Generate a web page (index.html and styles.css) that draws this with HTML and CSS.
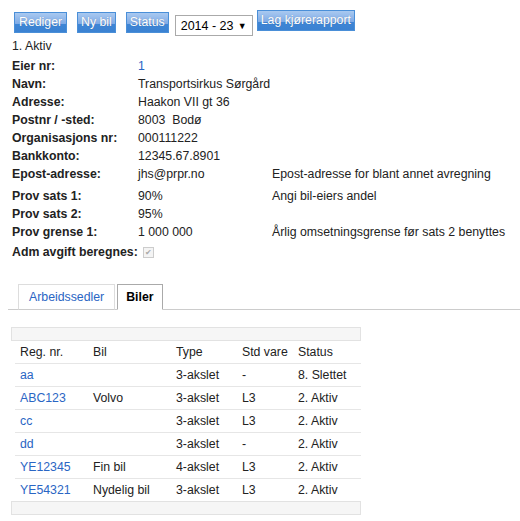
FILE: index.html
```html
<!DOCTYPE html>
<html lang="no">
<head>
  <meta charset="UTF-8" />
  <title>Eier</title>
  <link rel="stylesheet" href="styles.css">
</head>
<body>
  <div class="toolbar">
    <button class="btn">Rediger</button>
    <button class="btn">Ny bil</button>
    <button class="btn">Status</button>
    <div class="select">2014 - 23 <span class="arrow">&#9660;</span></div>
    <button class="btn btn-report">Lag kjørerapport</button>
  </div>

  <div class="status">1. Aktiv</div>

  <div class="details">
    <div class="row"><span class="label">Eier nr:</span><a class="value" href="#">1</a></div>
    <div class="row"><span class="label">Navn:</span><span class="value">Transportsirkus Sørgård</span></div>
    <div class="row"><span class="label">Adresse:</span><span class="value">Haakon VII gt 36</span></div>
    <div class="row"><span class="label">Postnr / -sted:</span><span class="value">8003&nbsp; Bodø</span></div>
    <div class="row"><span class="label">Organisasjons nr:</span><span class="value">000111222</span></div>
    <div class="row"><span class="label">Bankkonto:</span><span class="value">12345.67.8901</span></div>
    <div class="row row-gap"><span class="label">Epost-adresse:</span><span class="value">jhs@prpr.no</span><span class="note">Epost-adresse for blant annet avregning</span></div>
    <div class="row"><span class="label">Prov sats 1:</span><span class="value">90%</span><span class="note">Angi bil-eiers andel</span></div>
    <div class="row"><span class="label">Prov sats 2:</span><span class="value">95%</span></div>
    <div class="row"><span class="label">Prov grense 1:</span><span class="value">1 000 000</span><span class="note">Årlig omsetningsgrense før sats 2 benyttes</span></div>
    <div class="row row-check"><span class="label label-wide">Adm avgift beregnes:</span><span class="check">&#10004;</span></div>
  </div>

  <div class="tabs">
    <a class="tab" href="#">Arbeidssedler</a>
    <span class="tab tab-active">Biler</span>
  </div>

  <div class="panel">
    <div class="bar"></div>
    <table class="cars">
      <thead>
        <tr><th class="c-reg">Reg. nr.</th><th class="c-bil">Bil</th><th class="c-type">Type</th><th class="c-vare">Std vare</th><th>Status</th></tr>
      </thead>
      <tbody>
        <tr><td><a href="#">aa</a></td><td></td><td>3-akslet</td><td>-</td><td>8. Slettet</td></tr>
        <tr><td><a href="#">ABC123</a></td><td>Volvo</td><td>3-akslet</td><td>L3</td><td>2. Aktiv</td></tr>
        <tr><td><a href="#">cc</a></td><td></td><td>3-akslet</td><td>L3</td><td>2. Aktiv</td></tr>
        <tr><td><a href="#">dd</a></td><td></td><td>3-akslet</td><td>-</td><td>2. Aktiv</td></tr>
        <tr><td><a href="#">YE12345</a></td><td>Fin bil</td><td>4-akslet</td><td>L3</td><td>2. Aktiv</td></tr>
        <tr><td><a href="#">YE54321</a></td><td>Nydelig bil</td><td>3-akslet</td><td>L3</td><td>2. Aktiv</td></tr>
      </tbody>
    </table>
    <div class="bar"></div>
  </div>
</body>
</html>
```

FILE: styles.css
```css
body {
  margin: 0;
  padding: 0;
  font-family: "Liberation Sans", Arial, sans-serif;
  font-size: 12.3px;
  color: #222;
  background: #fff;
}

a {
  color: #2a66c4;
  text-decoration: none;
}

.toolbar {
  display: flex;
  align-items: flex-start;
  padding: 12px 0 0 14px;
  height: 25px;
}

.btn {
  font-family: "Liberation Sans", Arial, sans-serif;
  font-size: 12.3px;
  color: #fff;
  height: 21px;
  padding: 0 3px 1px;
  margin-right: 10px;
  border: 1px solid #4a8fd8;
  background: linear-gradient(to bottom, #a9c9f0 0%, #7eaae6 58%, #3f86d6 58%, #3b82d2 100%);
  text-shadow: 0 0 1px rgba(0, 0, 0, 0.25);
  cursor: pointer;
}

.btn:first-child {
  padding: 0 4px 1px;
}

.btn-report {
  margin-top: -2px;
  margin-right: 0;
}

.select {
  display: flex;
  align-items: center;
  justify-content: space-between;
  box-sizing: border-box;
  width: 78px;
  height: 21px;
  margin: 3px 4px 0 -4px;
  padding: 0 5px 0 5px;
  border: 1px solid #aaa;
  font-size: 12.5px;
  color: #000;
}

.arrow {
  font-size: 9px;
}

.status {
  padding-left: 12px;
  line-height: 18px;
}

.details {
  padding: 2px 0 0 12px;
}

.row {
  display: flex;
  line-height: 18px;
  white-space: nowrap;
}

.row-gap {
  margin-bottom: 4px;
}

.row-check {
  margin-top: 2px;
}

.label {
  width: 126px;
  flex: none;
  font-weight: bold;
}

.label-wide {
  width: 131px;
}

.value {
  width: 134px;
  flex: none;
}

.check {
  box-sizing: border-box;
  width: 11px;
  height: 11px;
  margin-top: 4px;
  border: 1px solid #ccc;
  background: #f4f4f4;
  color: #aaa;
  font-size: 8px;
  line-height: 9px;
  text-align: center;
}

.tabs {
  display: flex;
  align-items: flex-end;
  margin: 23px 0 0 8px;
  padding-left: 10px;
  border-bottom: 1px solid #ccc;
  height: 25px;
}

.tab {
  box-sizing: border-box;
  height: 26px;
  margin-bottom: -1px;
  margin-right: 2px;
  padding: 0 10px;
  line-height: 25px;
  border: 1px solid #ddd;
  border-bottom: 1px solid #ccc;
  background: #fff;
}

.tab-active {
  border-color: #aaa;
  border-bottom-color: #fff;
  font-weight: bold;
  color: #000;
  padding: 0 8px;
}

.panel {
  width: 350px;
  margin: 17px 0 0 11px;
}

.bar {
  height: 12px;
  border: 1px solid #e2e2e2;
  background: #f6f6f6;
}

.cars {
  width: 346px;
  margin-left: 4px;
  border-collapse: collapse;
}

.cars th,
.cars td {
  height: 22px;
  padding: 0 0 0 5px;
  text-align: left;
  font-weight: normal;
  border-bottom: 1px solid #e6e6e6;
}

.cars tbody tr:last-child td {
  border-bottom: none;
}

.c-reg { width: 68px; }
.c-bil { width: 78px; }
.c-type { width: 61px; }
.c-vare { width: 51px; }
```
